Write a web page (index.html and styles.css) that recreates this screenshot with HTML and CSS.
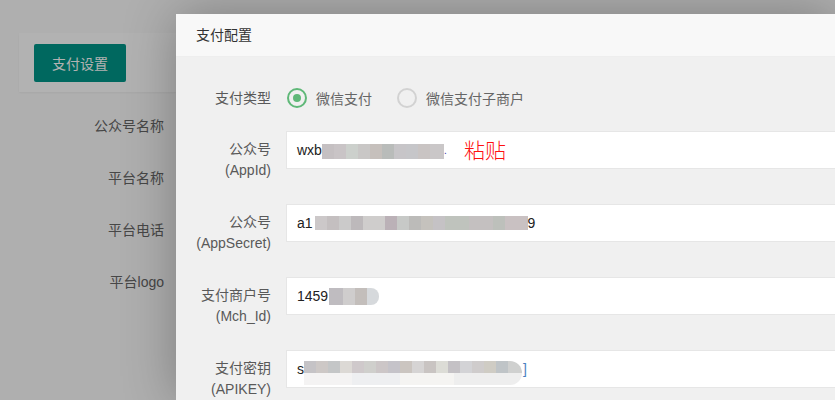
FILE: index.html
```html
<!DOCTYPE html>
<html lang="zh-CN">
<head>
    <meta charset="UTF-8">
    <title>支付配置</title>
    <link rel="stylesheet" href="styles.css">
</head>
<body>
    <div class="page">
        <div class="card">
            <button class="btn">支付设置</button>
        </div>
        <div class="base-form">
            <div class="base-row"><label>公众号名称</label></div>
            <div class="base-row"><label>平台名称</label></div>
            <div class="base-row"><label>平台电话</label></div>
            <div class="base-row"><label>平台logo</label></div>
        </div>
    </div>
    <div class="shade"></div>

    <div class="layer">
        <div class="layer-title">支付配置</div>
        <div class="layer-body">
            <div class="row row-radio">
                <label class="label">支付类型</label>
                <div class="radios">
                    <span class="radio on"><i></i>微信支付</span>
                    <span class="radio"><i></i>微信支付子商户</span>
                </div>
            </div>
            <div class="row">
                <label class="label">公众号<br>(AppId)</label>
                <div class="input">wxb<span class="mosaic m1"></span><span class="dot">.</span>
                    <span class="paste">粘贴</span>
                </div>
            </div>
            <div class="row">
                <label class="label">公众号<br>(AppSecret)</label>
                <div class="input">a1<span class="mosaic m2"></span>9</div>
            </div>
            <div class="row">
                <label class="label">支付商户号<br>(Mch_Id)</label>
                <div class="input">1459<span class="mosaic m3"></span></div>
            </div>
            <div class="row">
                <label class="label">支付密钥<br>(APIKEY)</label>
                <div class="input">s<span class="mosaic m4"></span><span class="bracket">]</span></div>
            </div>
        </div>
    </div>
</body>
</html>
```

FILE: styles.css
```css
*{
    margin: 0;
    padding: 0;
    box-sizing: border-box;
}
body{
    width: 835px;
    height: 400px;
    overflow: hidden;
    background: #fbfbfb;
    font-family: "Liberation Sans", "Noto Sans CJK SC", sans-serif;
    font-size: 14px;
    color: #333;
    position: relative;
}

/* page under the shade */
.page{
    padding-top: 33px;
    padding-left: 19px;
}
.card{
    width: 157px;
    height: 59px;
    background: #fff;
    padding: 11px 15px 0;
    box-shadow: 0 1px 2px rgba(0,0,0,.05);
}
.btn{
    width: 92px;
    height: 38px;
    border: none;
    background: #009688;
    color: #fff;
    font-family: inherit;
    font-size: 14px;
    border-radius: 2px;
}
.base-form{
    padding-top: 16px;
}
.base-row{
    height: 52px;
}
.base-row label{
    display: block;
    width: 145px;
    text-align: right;
    line-height: 20px;
    padding-top: 8px;
    color: #666;
}
.shade{
    position: absolute;
    left: 0;
    top: 0;
    right: 0;
    bottom: 0;
    background: rgba(0,0,0,.3);
}

/* layer */
.layer{
    position: absolute;
    left: 176px;
    top: 14px;
    width: 659px;
    height: 386px;
    overflow: hidden;
    background: #f0f0f0;
    box-shadow: 1px 1px 50px rgba(0,0,0,.3);
}
.layer-title{
    height: 43px;
    line-height: 42px;
    padding-left: 20px;
    background: #f8f8f8;
    border-bottom: 1px solid #eee;
    color: #333;
}
.layer-body{
    padding-top: 22px;
}
.row{
    display: flex;
    align-items: flex-start;
    height: 73px;
}
.row-radio{
    height: 52px;
    align-items: center;
}
.row-radio .label{
    padding-top: 0;
    margin-top: -14px;
}
.label{
    width: 95px;
    flex: none;
    text-align: right;
    line-height: 21px;
    padding-top: 8px;
    color: #595959;
}
.radios{
    display: flex;
    align-items: center;
    margin-left: 16px;
    margin-top: -14px;
    color: #666;
}
.radio{
    display: flex;
    align-items: center;
    margin-right: 25px;
}
.radio i{
    width: 20px;
    height: 20px;
    border: 2px solid #d2d2d2;
    border-radius: 50%;
    margin-right: 9px;
    position: relative;
}
.radio.on i{
    border-color: #5fb878;
}
.radio.on i:after{
    content: "";
    position: absolute;
    left: 4px;
    top: 4px;
    width: 8px;
    height: 8px;
    border-radius: 50%;
    background: #5fb878;
}
.input{
    position: relative;
    flex: 1;
    margin-left: 15px;
    margin-right: -20px;
    height: 38px;
    background: #fff;
    border: 1px solid #e6e6e6;
    padding-left: 10px;
    display: flex;
    align-items: center;
    color: #222;
    white-space: nowrap;
}

/* blurred values */
.mosaic{
    display: inline-block;
}
.m1{
    width: 122px;
    height: 15px;
    margin-top: 2px;
    background: linear-gradient(90deg, #c5c0c2 0 12px, #c9c4c6 12px 24px, #ccd0cc 24px 36px, #c9c7c6 36px 48px, #c6c0bc 48px 60px, #b9bcba 60px 72px, #c7c5c8 72px 84px, #c6c6c9 84px 96px, #c9c4c3 96px 108px, #cac7c8 108px 122px);
}
.dot{
    color: #33a;
    font-size: 10px;
}
.m2{
    width: 213px;
    height: 14px;
    margin-left: 2px;
    background: linear-gradient(90deg, #ccc8c9 0 12px, #c4bfc0 12px 24px, #cbcaca 24px 36px, #bdb9bb 36px 48px, #cfcdcc 48px 70px, #bbb1b7 70px 82px, #c7c9c7 82px 94px, #bcbbb9 94px 106px, #c5c2bd 106px 118px, #c5c2c5 118px 130px, #bfc3bd 130px 154px, #c4c0c0 154px 178px, #bdc0bb 178px 190px, #c9c1c2 190px 213px);
}
.m3{
    width: 50px;
    height: 17px;
    margin-left: 1px;
    border-radius: 0 8px 8px 0;
    background: linear-gradient(90deg, #bfbcc0 0 14px, #cfcdcd 14px 26px, #c3bebb 26px 38px, #d6d9dc 38px 50px);
}
.m4{
    width: 218px;
    height: 24px;
    margin-top: 8px;
    border-radius: 0 12px 12px 0;
    background:
        linear-gradient(90deg, #c5c3c6 0 12px, #cdc8c6 12px 24px, #c4c6c7 24px 36px, #dcd9d5 36px 48px, #cfc9cb 48px 60px, #cfcfcc 60px 72px, #ccc6c7 72px 84px, #c5c3c9 84px 96px, #cbc5c0 96px 108px, #d6d4d4 108px 120px, #c9c4c2 120px 132px, #dcdcd6 132px 144px, #c4c1c5 144px 156px, #d3d3d6 156px 168px, #cfcccc 168px 180px, #cfccc4 180px 192px, #bfc4c7 192px 204px, #cfd0cf 204px 218px) top / 100% 12px no-repeat,
        linear-gradient(90deg, #f4f3f3 0 48px, #eeeff1 48px 96px, #f5f4f2 96px 150px, #eeeeee 150px 218px) bottom / 100% 12px no-repeat;
}
.bracket{
    color: #4a7fc0;
    margin-left: 1px;
}
.paste{
    position: absolute;
    left: 177px;
    top: 5px;
    font-family: "Noto Sans CJK SC", sans-serif;
    font-weight: 300;
    font-size: 21px;
    line-height: 24px;
    color: #ff1010;
}
```
